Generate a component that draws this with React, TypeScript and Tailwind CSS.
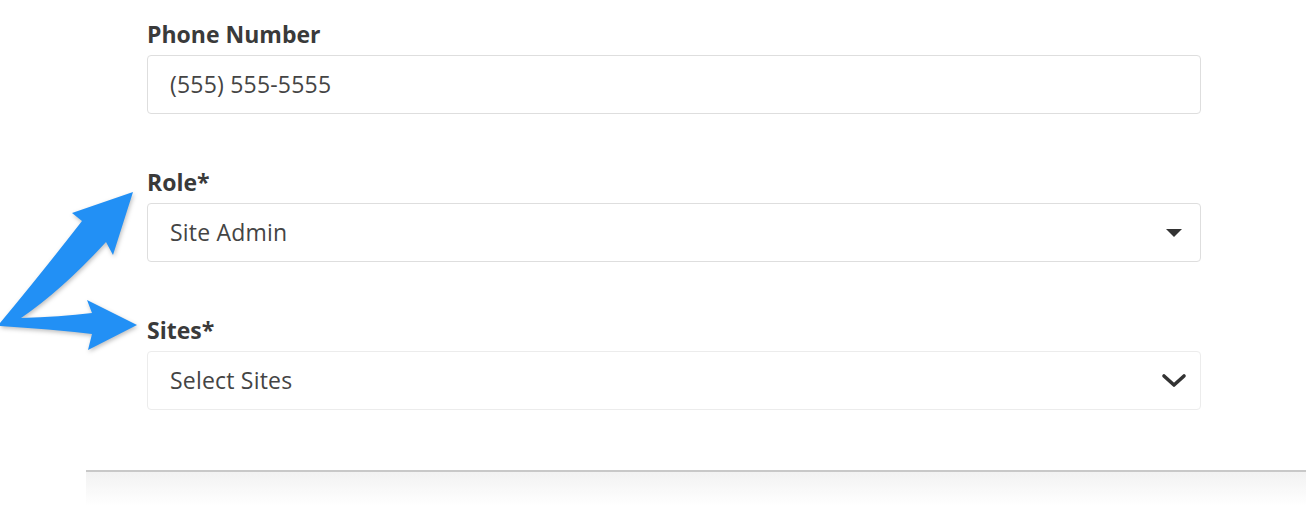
type FieldProps = {
  label: string;
  value: string;
  icon?: 'caret' | 'chevron';
  faint?: boolean;
};

function Field({ label, value, icon, faint }: FieldProps) {
  return (
    <div className="mb-[50px]">
      <label className="block text-[23px] leading-[36px] font-bold text-[#3a3a3a] mb-[3px]">
        {label}
      </label>
      <div
        className={`h-[59px] flex items-center justify-between rounded-[4px] border bg-white pl-[22px] pr-[14px] ${
          faint ? 'border-[#ececec]' : 'border-[#dedede]'
        }`}
      >
        <span className="text-[23px] tracking-[0.2px] text-[#444]">{value}</span>
        {icon === 'caret' && (
          <svg width="24" height="12" viewBox="0 0 24 12" className="mr-[0px]">
            <path d="M4 2 L20 2 L12 10 Z" fill="#333" />
          </svg>
        )}
        {icon === 'chevron' && (
          <svg width="26" height="16" viewBox="0 0 26 16" className="-mr-[1px]">
            <path
              d="M3 3 L13 12 L23 3"
              fill="none"
              stroke="#333"
              strokeWidth="3.6"
              strokeLinecap="round"
              strokeLinejoin="round"
            />
          </svg>
        )}
      </div>
    </div>
  );
}

function Arrows() {
  return (
    <svg
      className="absolute left-0 top-0 pointer-events-none"
      width="150"
      height="400"
      viewBox="0 0 150 400"
      style={{ filter: 'drop-shadow(1px 2px 2px rgba(0,0,0,0.25))' }}
    >
      <path
        d="M0 323
           Q40 275 82 221
           L72 213
           L133 192
           L113 255
           L106 242
           Q62 290 21 318
           Q60 317 92 313
           L87 300
           L137 325
           L88 350
           L92 334
           Q50 329 0 326 Z"
        fill="#2290f5"
      />
    </svg>
  );
}

export default function App() {
  return (
    <div className="relative w-[1306px] h-[516px] bg-white overflow-hidden font-['Open_Sans',sans-serif]">
      <div className="pl-[147px] pr-[105px] pt-[16px] pb-[10px]">
        <Field label="Phone Number" value="(555) 555-5555" />
        <Field label="Role*" value="Site Admin" icon="caret" />
        <Field label="Sites*" value="Select Sites" icon="chevron" faint />
      </div>
      <div className="ml-[86px] border-t-2 border-[#c8c8c8] h-[36px] bg-gradient-to-b from-[#f2f2f2] to-white" />
      <Arrows />
    </div>
  );
}
